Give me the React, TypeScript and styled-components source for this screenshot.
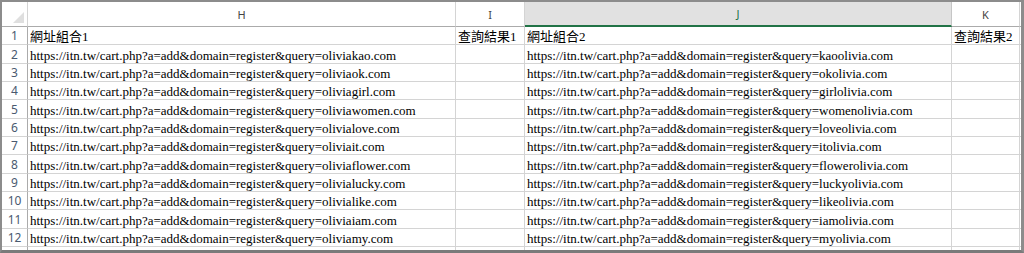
import React from "react";
import styled, { createGlobalStyle } from "styled-components";

const GlobalStyle = createGlobalStyle`
  html, body {
    margin: 0;
    padding: 0;
    background: #ffffff;
  }
`;

const prefixes = [
  "kao",
  "ok",
  "girl",
  "women",
  "love",
  "it",
  "flower",
  "lucky",
  "like",
  "iam",
  "my",
];

const base = "https://itn.tw/cart.php?a=add&domain=register&query=";

const columns = ["H", "I", "J", "K"];

const rows: string[][] = [
  ["網址組合1", "查詢結果1", "網址組合2", "查詢結果2"],
  ...prefixes.map((p) => [
    `${base}olivia${p}.com`,
    "",
    `${base}${p}olivia.com`,
    "",
  ]),
  ["", "", "", ""],
];

const App = () => {
  return (
    <>
      <GlobalStyle />
      <Frame>
        <Sheet>
          <Corner>
            <Triangle />
          </Corner>
          {columns.map((c) => (
            <ColHead key={c} selected={c === "J"}>
              {c}
            </ColHead>
          ))}
          <ColHead selected={false} />
          {rows.map((row, i) => (
            <React.Fragment key={i}>
              <RowHead>{i < 12 ? i + 1 : ""}</RowHead>
              {row.map((v, j) => (
                <Cell key={j}>{v}</Cell>
              ))}
              <Cell />
            </React.Fragment>
          ))}
        </Sheet>
      </Frame>
    </>
  );
};

const Frame = styled.div`
  width: 1024px;
  height: 253px;
  box-sizing: border-box;
  border-top: 2px solid #8c8c8c;
  border-left: 2px solid #8c8c8c;
  border-right: 3px solid #8c8c8c;
  border-bottom: 3px solid #7a7a7a;
  overflow: hidden;
  background: #fff;
`;

const Sheet = styled.div`
  display: grid;
  grid-template-columns: 26px 428px 69px 427px 68px 10px;
  grid-template-rows: 25px repeat(13, 18.33px);
`;

const Corner = styled.div`
  position: relative;
  box-sizing: border-box;
  border-right: 1px solid #d4d4d4;
  border-bottom: 1px solid #ababab;
`;

const Triangle = styled.div`
  position: absolute;
  right: 3px;
  bottom: 3px;
  width: 0;
  height: 0;
  border-left: 11px solid transparent;
  border-bottom: 11px solid #dfdfdf;
`;

const ColHead = styled.div<{ selected: boolean }>`
  box-sizing: border-box;
  display: flex;
  align-items: center;
  justify-content: center;
  font-family: "Noto Sans", "DejaVu Sans", sans-serif;
  font-size: 11px;
  color: ${({ selected }) => (selected ? "#217346" : "#444")};
  background: ${({ selected }) => (selected ? "#e1e1e1" : "#fff")};
  border-right: 1px solid ${({ selected }) => (selected ? "#c6c6c6" : "#d4d4d4")};
  border-bottom: ${({ selected }) =>
    selected ? "2px solid #217346" : "1px solid #ababab"};
`;

const RowHead = styled.div`
  box-sizing: border-box;
  display: flex;
  align-items: flex-end;
  justify-content: center;
  font-family: "Noto Sans", "DejaVu Sans", sans-serif;
  font-size: 12px;
  line-height: 16px;
  color: #4a5a70;
  border-right: 1px solid #ababab;
  border-bottom: 1px solid #d4d4d4;
`;

const Cell = styled.div`
  box-sizing: border-box;
  display: flex;
  align-items: flex-end;
  padding: 0 0 0 2px;
  font-family: "Liberation Serif", "Noto Sans CJK TC", serif;
  font-size: 13px;
  line-height: 15px;
  color: #000;
  white-space: nowrap;
  overflow: hidden;
  border-right: 1px solid #d4d4d4;
  border-bottom: 1px solid #d4d4d4;
`;

export default App;
